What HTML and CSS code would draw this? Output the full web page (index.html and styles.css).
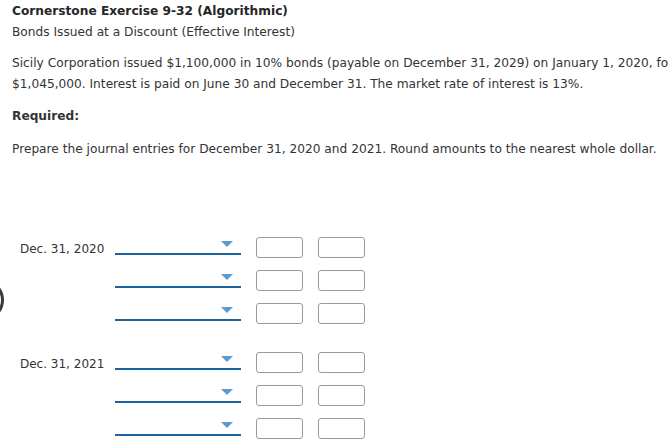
FILE: index.html
```html
<!DOCTYPE html>
<html>
<head>
<meta charset="utf-8">
<link rel="stylesheet" href="styles.css">
</head>
<body>
<div class="page">
  <h1 class="title">Cornerstone Exercise 9-32 (Algorithmic)</h1>
  <div class="subtitle">Bonds Issued at a Discount (Effective Interest)</div>
  <p class="para">Sicily Corporation issued $1,100,000 in 10% bonds (payable on December 31, 2029) on January 1, 2020, for<br>$1,045,000. Interest is paid on June 30 and December 31. The market rate of interest is 13%.</p>
  <div class="req">Required:</div>
  <p class="prepare">Prepare the journal entries for December 31, 2020 and 2021. Round amounts to the nearest whole dollar.</p>

  <div class="journal">
    <div class="entry">
      <div class="row">
        <div class="date">Dec. 31, 2020</div>
        <div class="select"><span class="caret"></span></div>
        <div class="box"></div>
        <div class="box"></div>
      </div>
      <div class="row">
        <div class="date"></div>
        <div class="select"><span class="caret"></span></div>
        <div class="box"></div>
        <div class="box"></div>
      </div>
      <div class="row">
        <div class="date"></div>
        <div class="select"><span class="caret"></span></div>
        <div class="box"></div>
        <div class="box"></div>
      </div>
    </div>
    <div class="entry">
      <div class="row">
        <div class="date">Dec. 31, 2021</div>
        <div class="select"><span class="caret"></span></div>
        <div class="box"></div>
        <div class="box"></div>
      </div>
      <div class="row">
        <div class="date"></div>
        <div class="select"><span class="caret"></span></div>
        <div class="box"></div>
        <div class="box"></div>
      </div>
      <div class="row">
        <div class="date"></div>
        <div class="select"><span class="caret"></span></div>
        <div class="box"></div>
        <div class="box"></div>
      </div>
    </div>
  </div>
</div>
<div class="ring"></div>
</body>
</html>
```

FILE: styles.css
```css
html, body {
  margin: 0;
  padding: 0;
  overflow: hidden;
  background: #fff;
}
body {
  font-family: "DejaVu Sans", Verdana, sans-serif;
  color: #333;
  font-size: 12.2px;
  line-height: 21px;
}
.page {
  padding: 1px 0 0 12px;
  white-space: nowrap;
}
.title {
  margin: 0;
  font-size: 12.2px;
  font-weight: bold;
  line-height: 21px;
  color: #262626;
}
.subtitle {
  margin: 0;
}
.para {
  margin: 10px 0 0 0;
}
.req {
  margin-top: 11px;
  font-weight: bold;
}
.prepare {
  margin: 12px 0 0 0;
}
.journal {
  margin-top: 77px;
  padding-left: 8px;
  display: flex;
  flex-direction: column;
  gap: 28px;
}
.entry {
  display: flex;
  flex-direction: column;
  gap: 12px;
}
.row {
  display: flex;
  align-items: flex-start;
  height: 21px;
}
.date {
  width: 95px;
  font-size: 12px;
  line-height: 21px;
  padding-top: 2px;
  color: #333;
}
.select {
  width: 126px;
  height: 16px;
  border-bottom: 2px solid #1b64a0;
  display: flex;
  justify-content: flex-end;
}
.caret {
  margin-top: 4px;
  margin-right: 8px;
  width: 0;
  height: 0;
  border-left: 6px solid transparent;
  border-right: 6px solid transparent;
  border-top: 6px solid #5b9bd5;
}
.box {
  margin-left: 15px;
  width: 45px;
  height: 19px;
  border: 1px solid #9a9a9a;
  border-radius: 3px;
}
.ring {
  position: absolute;
  left: -38px;
  top: 279px;
  width: 36px;
  height: 36px;
  border: 3px solid #3a3a3a;
  border-radius: 50%;
}
```
